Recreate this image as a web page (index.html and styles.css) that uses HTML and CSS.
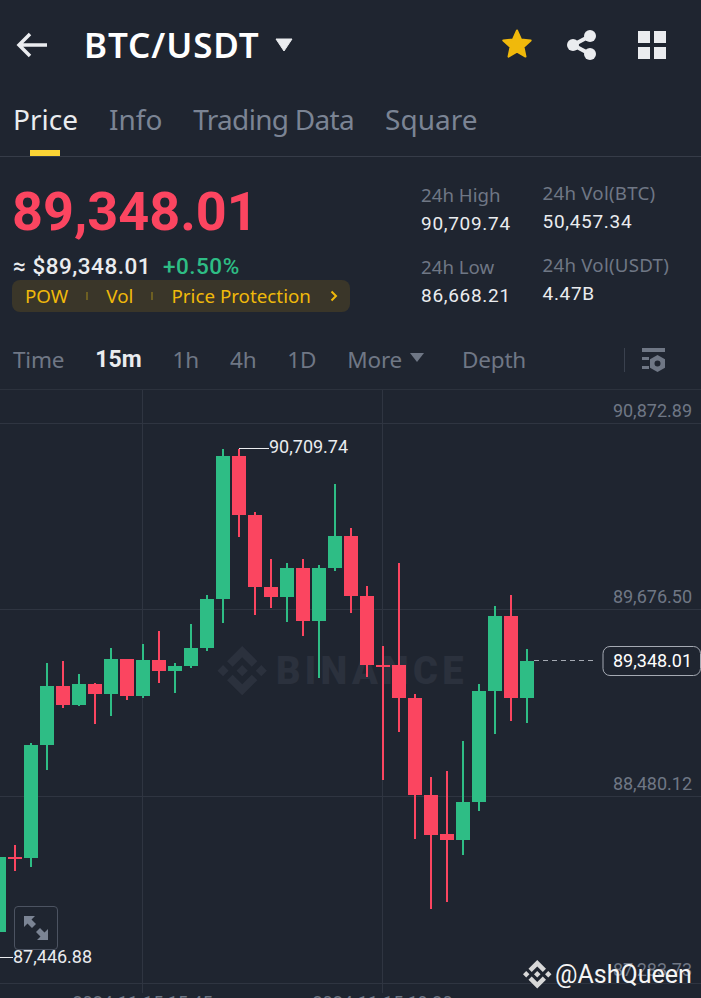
FILE: index.html
```html
<!DOCTYPE html>
<html>
<head>
    <meta charset="utf-8">
    <title>BTC/USDT</title>
    <link rel="stylesheet" href="styles.css">
</head>

<body>
    <header class="topbar">
        <svg class="back" viewBox="0 0 32 26"><path d="M14 2 3 13l11 11M3 13h28"></path></svg>
        <h1 class="pair">BTC/USDT</h1>
        <svg class="caret" viewBox="0 0 18 14"><path d="M1 1h16L9 13z"></path></svg>
        <div class="actions">
            <svg class="star" viewBox="0 0 32 32"><path d="M16 2.500l4 9 9.700 1-7.200 6.500 2 9.600-8.500-4.900-8.500 4.900 2-9.600-7.200-6.500 9.700-1z"></path></svg>
            <svg class="share" viewBox="0 0 30 30">
                <path d="M6 15 23 6M6 15l17 9"></path>
                <circle cx="6" cy="15" r="6"></circle>
                <circle cx="23" cy="6" r="6"></circle>
                <circle cx="23" cy="24" r="6"></circle>
            </svg>
            <div class="grid-icon"><i></i><i></i><i></i><i></i></div>
        </div>
    </header>

    <nav class="tabs">
        <a class="tab on">Price</a>
        <a class="tab">Info</a>
        <a class="tab tight">Trading Data</a>
        <a class="tab">Square</a>
    </nav>

    <section class="ticker">
        <div class="ticker-left">
            <div class="last">89,348.01</div>
            <div class="fiat"><span>≈ $89,348.01</span><span class="chg">+0.50%</span></div>
            <div class="tags">
                <span>POW</span><i></i><span>Vol</span><i></i><span>Price Protection</span>
                <svg viewBox="0 0 8 12"><path d="M1.500 1.500 6 6l-4.500 4.500"></path></svg>
            </div>
        </div>
        <div class="stats">
            <div class="stat s1"><label>24h High</label><b>90,709.74</b></div>
            <div class="stat s2"><label>24h Vol(BTC)</label><b>50,457.34</b></div>
            <div class="stat s1"><label>24h Low</label><b>86,668.21</b></div>
            <div class="stat s2"><label>24h Vol(USDT)</label><b>4.47B</b></div>
        </div>
    </section>

    <nav class="periods">
        <a>Time</a>
        <a class="on">15m</a>
        <a>1h</a>
        <a>4h</a>
        <a>1D</a>
        <a class="more">More<svg viewBox="0 0 14 10"><path d="M0 0h14L7 9z"></path></svg></a>
        <a class="depth">Depth</a>
        <span class="sep"></span>
        <svg class="setup" viewBox="0 0 24 24">
            <path d="M0 0h23v4H0zM0 9h7v3H0zM0 18h7v3H0z"></path>
            <path fill-rule="evenodd" d="M15.500 7l7.500 4.300v8.400L15.500 24 8 19.700v-8.400zM15.500 12.500a3 3 0 1 0 0 6 3 3 0 0 0 0-6z"></path>
        </svg>
    </nav>

    <section class="chart">
        <svg class="plot" viewBox="0 390 701 608">
            <defs>
                <path id="bnb" d="M38.730 53.200l24.590-24.580 24.600 24.600 14.300-14.310L63.320 0 24.420 38.900zM0 63.310l14.300-14.310 14.310 14.310-14.310 14.300zM38.730 73.410l24.590 24.590 24.600-24.600 14.310 14.290-38.900 38.910-38.910-38.880-.02-.02zM98 63.310l14.300-14.310 14.310 14.310-14.300 14.300zM77.830 63.300L63.320 48.780 52.590 59.510l-1.240 1.230-2.540 2.540 14.510 14.500 14.510-14.470z"></path>
            </defs>

            <path class="gridline" d="M0 423.500H701M0 609.500H701M0 796.500H701M0 983.500H701M142.500 390V993M382.500 390V993"></path>

            <use href="#bnb" class="mark" transform="translate(217.500 646) scale(.39)"></use>
            <text class="mark-text" x="276" y="684">BINANCE</text>

            <text class="axis" x="692" y="417">90,872.89</text>
            <text class="axis" x="692" y="603">89,676.50</text>
            <text class="axis" x="692" y="790">88,480.12</text>
            <text class="axis" x="692" y="976">87,283.73</text>
            <text class="date" x="142.500" y="1009">2024-11-15 15:45</text>
            <text class="date" x="382.500" y="1009">2024-11-15 19:30</text>

            <g class="up">
                <rect x="-8" y="857" width="14" height="75"></rect>
                <rect x="30" y="743" width="2" height="124"></rect><rect x="24" y="745" width="14" height="113"></rect>
                <rect x="46" y="663" width="2" height="107"></rect><rect x="40" y="686" width="14" height="59"></rect>
                <rect x="78" y="674" width="2" height="32"></rect><rect x="72" y="684" width="14" height="21"></rect>
                <rect x="110" y="648" width="2" height="68"></rect><rect x="104" y="659" width="14" height="35"></rect>
                <rect x="142" y="644" width="2" height="54"></rect><rect x="136" y="660" width="14" height="36"></rect>
                <rect x="174" y="663" width="2" height="30"></rect><rect x="168" y="666" width="14" height="5"></rect>
                <rect x="190" y="624" width="2" height="44"></rect><rect x="184" y="648" width="14" height="18"></rect>
                <rect x="206" y="595" width="2" height="56"></rect><rect x="200" y="599" width="14" height="49"></rect>
                <rect x="222" y="449" width="2" height="174"></rect><rect x="216" y="456" width="14" height="143"></rect>
                <rect x="286" y="563" width="2" height="59"></rect><rect x="280" y="568" width="14" height="29"></rect>
                <rect x="318" y="565" width="2" height="113"></rect><rect x="312" y="568" width="14" height="53"></rect>
                <rect x="334" y="484" width="2" height="87"></rect><rect x="328" y="536" width="14" height="32"></rect>
                <rect x="462" y="741" width="2" height="114"></rect><rect x="456" y="802" width="14" height="38"></rect>
                <rect x="478" y="684" width="2" height="127"></rect><rect x="472" y="691" width="14" height="111"></rect>
                <rect x="494" y="606" width="2" height="128"></rect><rect x="488" y="616" width="14" height="75"></rect>
                <rect x="526" y="649" width="2" height="74"></rect><rect x="520" y="661" width="14" height="37"></rect>
            </g>
            <g class="down">
                <rect x="14" y="845" width="2" height="26"></rect><rect x="8" y="857" width="14" height="2"></rect>
                <rect x="62" y="661" width="2" height="47"></rect><rect x="56" y="686" width="14" height="19"></rect>
                <rect x="94" y="683" width="2" height="41"></rect><rect x="88" y="684" width="14" height="10"></rect>
                <rect x="126" y="659" width="2" height="41"></rect><rect x="120" y="659" width="14" height="37"></rect>
                <rect x="158" y="631" width="2" height="52"></rect><rect x="152" y="660" width="14" height="11"></rect>
                <rect x="238" y="449" width="2" height="88"></rect><rect x="232" y="456" width="14" height="59"></rect>
                <rect x="254" y="512" width="2" height="103"></rect><rect x="248" y="515" width="14" height="72"></rect>
                <rect x="270" y="559" width="2" height="49"></rect><rect x="264" y="587" width="14" height="10"></rect>
                <rect x="302" y="559" width="2" height="77"></rect><rect x="296" y="568" width="14" height="53"></rect>
                <rect x="350" y="528" width="2" height="85"></rect><rect x="344" y="536" width="14" height="60"></rect>
                <rect x="366" y="586" width="2" height="91"></rect><rect x="360" y="596" width="14" height="69"></rect>
                <rect x="382" y="646" width="2" height="134"></rect><rect x="376" y="665" width="14" height="2"></rect>
                <rect x="398" y="563" width="2" height="169"></rect><rect x="392" y="665" width="14" height="33"></rect>
                <rect x="414" y="694" width="2" height="145"></rect><rect x="408" y="698" width="14" height="97"></rect>
                <rect x="430" y="777" width="2" height="132"></rect><rect x="424" y="795" width="14" height="40"></rect>
                <rect x="446" y="771" width="2" height="131"></rect><rect x="440" y="834" width="14" height="6"></rect>
                <rect x="510" y="595" width="2" height="126"></rect><rect x="504" y="616" width="14" height="82"></rect>
            </g>

            <path class="callout" d="M239 448.500h30M0 957.500h13"></path>
            <text class="extreme" x="269" y="453">90,709.74</text>
            <text class="extreme" x="13" y="963">87,446.88</text>

            <path class="lastline" d="M534 660.500h62"></path>
            <rect class="lastbox" x="603" y="646.500" width="97.500" height="29" rx="7"></rect>
            <text class="lastval" x="613" y="667">89,348.01</text>

            <use href="#bnb" class="sig-logo" transform="translate(523 960) scale(.225)"></use>
            <text class="sig" x="555" y="983">@AshQueen</text>
        </svg>

        <div class="expand">
            <svg viewBox="0 0 26 26"><path d="M1 1h11L8.500 4.500 13 9l-4 4-4.500-4.500L1 12zM25 25H14l3.500-3.500L13 17l4-4 4.500 4.500L25 14z"></path></svg>
        </div>
    </section>
</body>
</html>
```

FILE: styles.css
```css
* {
    box-sizing: border-box;
}
html, body {
    margin: 0;
    height: 100%;
}
body {
    width: 701px;
    height: 998px;
    overflow: hidden;
    background: #1f2530;
    color: #eaecef;
    font-family: "Noto Sans", sans-serif;
}

/* top bar */
.topbar {
    display: flex;
    align-items: center;
    height: 89px;
    padding-left: 16px;
}
.back {
    width: 32px;
    height: 26px;
    fill: none;
    stroke: #eaecef;
    stroke-width: 3.5;
}
.pair {
    margin: 0 0 0 36px;
    font-size: 35px;
    font-weight: 600;
    letter-spacing: .9px;
    color: #fff;
}
.caret {
    width: 18px;
    height: 14px;
    margin-left: 15px;
    fill: #eaecef;
    stroke: #eaecef;
    stroke-width: 1;
    stroke-linejoin: round;
}
.actions {
    display: flex;
    align-items: center;
    margin-left: auto;
    padding-right: 35px;
}
.star {
    width: 32px;
    height: 32px;
    margin: 0 2px 2px 0;
    fill: #f0b90b;
    stroke: #f0b90b;
    stroke-width: 2;
    stroke-linejoin: round;
}
.share {
    width: 30px;
    height: 30px;
    margin-left: 32px;
    overflow: visible;
    fill: #eaecef;
    stroke: #eaecef;
    stroke-width: 0;
}
.share path {
    stroke-width: 4;
}
.grid-icon {
    display: grid;
    grid-template-columns: 12px 12px;
    gap: 4px;
    margin-left: 41px;
}
.grid-icon i {
    height: 12px;
    background: #eaecef;
}

/* tabs */
.tabs {
    display: flex;
    gap: 31px;
    height: 68px;
    padding: 9px 0 0 13px;
    border-bottom: 1px solid #363c48;
}
.tab {
    position: relative;
    font-size: 28px;
    line-height: 42px;
    color: #7b8494;
}
.tab.tight {
    letter-spacing: -.7px;
}
.tab.on {
    color: #eaecef;
}
.tab.on::after {
    content: "";
    position: absolute;
    left: 17px;
    bottom: 0;
    width: 30px;
    height: 6px;
    background: #fcd535;
}

/* price block */
.ticker {
    display: flex;
    height: 174px;
}
.ticker-left {
    width: 421px;
    padding: 18px 0 0 12px;
}
.last {
    font-family: Roboto, sans-serif;
    font-size: 54px;
    font-weight: 700;
    line-height: 74px;
    color: #fb4560;
}
.fiat {
    display: flex;
    gap: 12px;
    margin-top: 3px;
    padding-left: 1px;
    font-family: Roboto, sans-serif;
    font-size: 22.500px;
    font-weight: 500;
    line-height: 28px;
    letter-spacing: .5px;
}
.chg {
    color: #2ebd85;
}
.tags {
    display: flex;
    align-items: center;
    width: 338px;
    height: 32px;
    padding-left: 13px;
    font-size: 18.800px;
    color: #f0b90b;
    background: #3a3629;
    border-radius: 8px;
}
.tags i {
    width: 2px;
    height: 8px;
    margin: 0 18px;
    background: #6d5f22;
}
.tags svg {
    width: 8px;
    height: 12px;
    margin-left: 19px;
    fill: none;
    stroke: #f0b90b;
    stroke-width: 2;
}

.stats {
    display: grid;
    grid-template-columns: 121.500px 1fr;
    grid-auto-rows: 72px;
    padding-top: 24px;
}
.stat label {
    display: block;
    font-size: 18.700px;
    line-height: 28px;
    color: #6f7785;
}
.stat b {
    display: block;
    margin-top: 1px;
    font-family: Roboto, sans-serif;
    font-size: 19px;
    font-weight: 400;
    line-height: 28px;
    letter-spacing: .7px;
    color: #eaecef;
}
.stat.s2 {
    margin-top: -2px;
}
.stat.s2 label {
    letter-spacing: .25px;
}

/* period row */
.periods {
    display: flex;
    align-items: center;
    gap: 31px;
    height: 59px;
    padding: 0 35px 1px 13px;
    border-bottom: 1px solid #2c323d;
    font-size: 22.500px;
    letter-spacing: -.2px;
    color: #6f7785;
}
.periods .on {
    font-family: Roboto, sans-serif;
    font-size: 23px;
    font-weight: 700;
    letter-spacing: 0;
    color: #eaecef;
}
.more svg {
    width: 14px;
    height: 10px;
    margin: 0 0 5px 8px;
    fill: #6f7785;
}
.depth {
    margin-left: 7px;
}
.sep {
    width: 1px;
    height: 24px;
    margin-left: auto;
    background: #3a414e;
}
.setup {
    width: 24px;
    height: 24px;
    margin-left: -14px;
    fill: #6f7785;
}

/* chart */
.chart {
    position: relative;
    height: 608px;
}
.plot {
    display: block;
    width: 701px;
    height: 608px;
}
.gridline {
    fill: none;
    stroke: #2f3541;
    stroke-width: 1;
}
.mark {
    fill: #2b313d;
}
.mark-text {
    font-family: Roboto, sans-serif;
    font-size: 38px;
    font-weight: 900;
    letter-spacing: 4.300px;
    fill: #2b313d;
}
.up {
    fill: #2ebd85;
}
.down {
    fill: #fb4560;
}
.axis {
    font-family: Roboto, sans-serif;
    font-size: 18px;
    text-anchor: end;
    fill: #6f7785;
}
.date {
    font-family: Roboto, sans-serif;
    font-size: 18px;
    text-anchor: middle;
    fill: #6f7785;
}
.callout {
    fill: none;
    stroke: #eaecef;
    stroke-width: 1;
}
.extreme {
    font-family: Roboto, sans-serif;
    font-size: 18px;
    fill: #eaecef;
}
.lastline {
    fill: none;
    stroke: #a5aab3;
    stroke-width: 1;
    stroke-dasharray: 5 4;
}
.lastbox {
    fill: #1f2530;
    stroke: #a5aab3;
    stroke-width: 1;
}
.lastval {
    font-family: Roboto, sans-serif;
    font-size: 18px;
    fill: #fff;
}
.sig-logo {
    fill: #d8d8d8;
}
.sig {
    font-family: Roboto, sans-serif;
    font-size: 25px;
    fill: #f4f4f4;
}

.expand {
    position: absolute;
    left: 14px;
    top: 516px;
    display: flex;
    align-items: center;
    justify-content: center;
    width: 44px;
    height: 44px;
    background: #1f2530;
    border: 1px solid #4c5361;
    border-radius: 4px;
}
.expand svg {
    width: 26px;
    height: 26px;
    fill: #7b8494;
}
```
